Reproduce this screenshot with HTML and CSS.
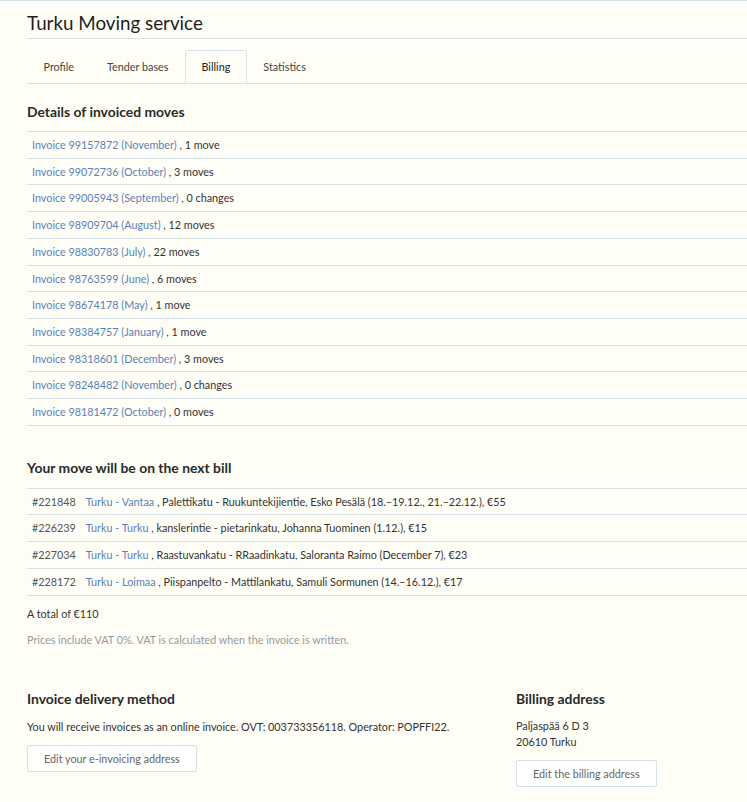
FILE: index.html
```html
<!DOCTYPE html>
<html>
<head>
<meta charset="utf-8">
<link rel="stylesheet" href="styles.css">
</head>
<body>
<div class="page">
  <h1 class="title">Turku Moving service</h1>
  <ul class="tabs">
    <li class="tab">Profile</li>
    <li class="tab">Tender bases</li>
    <li class="tab active">Billing</li>
    <li class="tab">Statistics</li>
  </ul>

  <h2 class="heading h-first">Details of invoiced moves</h2>
  <table class="list">
    <tr><td><a>Invoice 99157872 (November)</a> , 1 move</td></tr>
    <tr><td><a>Invoice 99072736 (October)</a> , 3 moves</td></tr>
    <tr><td><a>Invoice 99005943 (September)</a> , 0 changes</td></tr>
    <tr><td><a>Invoice 98909704 (August)</a> , 12 moves</td></tr>
    <tr><td><a>Invoice 98830783 (July)</a> , 22 moves</td></tr>
    <tr><td><a>Invoice 98763599 (June)</a> , 6 moves</td></tr>
    <tr><td><a>Invoice 98674178 (May)</a> , 1 move</td></tr>
    <tr><td><a>Invoice 98384757 (January)</a> , 1 move</td></tr>
    <tr><td><a>Invoice 98318601 (December)</a> , 3 moves</td></tr>
    <tr><td><a>Invoice 98248482 (November)</a> , 0 changes</td></tr>
    <tr><td><a>Invoice 98181472 (October)</a> , 0 moves</td></tr>
  </table>

  <h2 class="heading h-second">Your move will be on the next bill</h2>
  <table class="list moves">
    <tr><td class="num">#221848</td><td><a>Turku - Vantaa</a> , Palettikatu - Ruukuntekijientie, Esko Pesälä (18.–19.12., 21.–22.12.), €55</td></tr>
    <tr><td class="num">#226239</td><td><a>Turku - Turku</a> , kanslerintie - pietarinkatu, Johanna Tuominen (1.12.), €15</td></tr>
    <tr><td class="num">#227034</td><td><a>Turku - Turku</a> , Raastuvankatu - RRaadinkatu, Saloranta Raimo (December 7), €23</td></tr>
    <tr><td class="num">#228172</td><td><a>Turku - Loimaa</a> , Piispanpelto - Mattilankatu, Samuli Sormunen (14.–16.12.), €17</td></tr>
  </table>

  <p class="total">A total of €110</p>
  <p class="note">Prices include VAT 0%. VAT is calculated when the invoice is written.</p>

  <div class="bottom">
    <div class="col-left">
      <h2 class="heading">Invoice delivery method</h2>
      <p class="text">You will receive invoices as an online invoice. OVT: 003733356118. Operator: POPFFI22.</p>
      <button class="btn">Edit your e-invoicing address</button>
    </div>
    <div class="col-right">
      <h2 class="heading">Billing address</h2>
      <p class="text addr">Paljaspää 6 D 3<br>20610 Turku</p>
      <button class="btn">Edit the billing address</button>
    </div>
  </div>
</div>
</body>
</html>
```

FILE: styles.css
```css
html, body {
  margin: 0;
  padding: 0;
  background: #fefef7;
}
body {
  border-top: 1px solid #d6e2e8;
  font-family: Lato, "Open Sans", sans-serif;
  font-size: 10.8px;
  color: #333;
}
.page {
  padding-left: 27px;
}
.title {
  margin: 0;
  font-size: 18.8px;
  font-weight: 400;
  color: #1e1e1e;
  line-height: 24px;
  padding-top: 10px;
  padding-bottom: 3px;
  border-bottom: 1px solid #d6e2e8;
}
.tabs {
  list-style: none;
  margin: 11px 0 0 0;
  padding: 0;
  display: flex;
  border-bottom: 1px solid #d6e2e8;
}
.tab {
  padding: 0 15.5px;
  height: 32px;
  line-height: 32px;
  color: #444;
  border: 1px solid transparent;
  border-bottom: 0;
  border-radius: 3px 3px 0 0;
}
.tab.active {
  border-color: #d6e2e8;
  color: #222;
}
.heading {
  margin: 0;
  font-size: 13.9px;
  font-weight: 700;
  color: #2a2a2a;
  line-height: 18px;
}
.h-first {
  margin-top: 19px;
  margin-bottom: 10px;
}
.h-second {
  margin-top: 33px;
  margin-bottom: 11px;
}
.list {
  width: 100%;
  border-collapse: collapse;
}
.list td {
  border-top: 1px solid #d6e2e8;
  padding: 4px 5px;
  line-height: 17.7px;
  white-space: nowrap;
}
.list tr:last-child td {
  border-bottom: 1px solid #d6e2e8;
}
.list a {
  color: #5a80b8;
}
.moves td.num {
  width: 42px;
  color: #555;
}
.moves td:last-child {
  width: 100%;
}
.total {
  margin: 9px 0 0 0;
  line-height: 18px;
}
.note {
  margin: 8px 0 0 0;
  line-height: 18px;
  color: #999;
}
.bottom {
  display: flex;
  margin-top: 41px;
}
.col-left {
  width: 489px;
}
.col-right {
  flex: 1;
}
.text {
  margin: 10px 0 9px 0;
  line-height: 18px;
}
.addr {
  line-height: 16px;
  margin-bottom: 10px;
}
.btn {
  font-family: inherit;
  font-size: 10.8px;
  color: #666;
  background: #fffffd;
  border: 1px solid #d6e2e8;
  border-radius: 2px;
  padding: 0 16px;
  height: 27px;
  line-height: 25px;
}
```
